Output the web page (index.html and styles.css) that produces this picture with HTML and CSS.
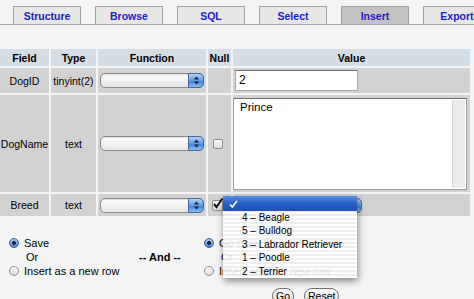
FILE: index.html
```html
<!DOCTYPE html>
<html>
<head>
<meta charset="utf-8">
<link rel="stylesheet" href="styles.css">
</head>
<body>
<div class="tabs">
  <div class="tab">Structure</div>
  <div class="tab">Browse</div>
  <div class="tab">SQL</div>
  <div class="tab">Select</div>
  <div class="tab active">Insert</div>
  <div class="tab">Export</div>
</div>

<table class="grid">
  <colgroup>
    <col class="c-field"><col class="c-type"><col class="c-func"><col class="c-null"><col class="c-value">
  </colgroup>
  <tr class="hdr">
    <th>Field</th><th>Type</th><th>Function</th><th>Null</th><th>Value</th>
  </tr>
  <tr class="r1">
    <td>DogID</td>
    <td>tinyint(2)</td>
    <td><div class="sel"><span class="sel-fill"></span><span class="sel-btn"><svg width="7" height="9" viewBox="0 0 7 9"><path d="M3.5 0.5 L6.2 3.6 H0.8 Z M3.5 8.5 L6.2 5.4 H0.8 Z" fill="#16254a"/></svg></span></div></td>
    <td></td>
    <td class="val"><div class="txt">2</div></td>
  </tr>
  <tr class="r2">
    <td>DogName</td>
    <td>text</td>
    <td><div class="sel"><span class="sel-fill"></span><span class="sel-btn"><svg width="7" height="9" viewBox="0 0 7 9"><path d="M3.5 0.5 L6.2 3.6 H0.8 Z M3.5 8.5 L6.2 5.4 H0.8 Z" fill="#16254a"/></svg></span></div></td>
    <td><div class="cb"></div></td>
    <td class="val"><div class="area"><span class="area-text">Prince</span><span class="scroll"></span></div></td>
  </tr>
  <tr class="r3">
    <td>Breed</td>
    <td>text</td>
    <td><div class="sel"><span class="sel-fill"></span><span class="sel-btn"><svg width="7" height="9" viewBox="0 0 7 9"><path d="M3.5 0.5 L6.2 3.6 H0.8 Z M3.5 8.5 L6.2 5.4 H0.8 Z" fill="#16254a"/></svg></span></div></td>
    <td><div class="cb checked"><svg width="12" height="12" viewBox="0 0 12 12"><path d="M2 6 L4.5 9 L10.5 0.5" fill="none" stroke="#111" stroke-width="2"/></svg></div></td>
    <td class="val"><div class="sel wide"><span class="sel-fill"></span><span class="sel-btn"></span></div></td>
  </tr>
</table>

<div class="options">
  <div class="opt-col left">
    <div class="line"><span class="radio on"></span>Save</div>
    <div class="line indent">Or</div>
    <div class="line"><span class="radio"></span>Insert as a new row</div>
  </div>
  <div class="and">-- And --</div>
  <div class="opt-col right">
    <div class="line"><span class="radio on"></span>Go back to previous page</div>
    <div class="line indent">Or</div>
    <div class="line"><span class="radio"></span>Insert another new row</div>
  </div>
</div>

<div class="buttons">
  <button class="btn">Go</button>
  <button class="btn">Reset</button>
</div>

<div class="menu">
  <div class="mi selected"><svg width="9" height="8" viewBox="0 0 9 8"><path d="M1 4.5 L3.3 7 L8 1" fill="none" stroke="#fff" stroke-width="1.6"/></svg></div>
  <div class="mi">4 – Beagle</div>
  <div class="mi">5 – Bulldog</div>
  <div class="mi">3 – Labrador Retriever</div>
  <div class="mi">1 – Poodle</div>
  <div class="mi">2 – Terrier</div>
</div>
</body>
</html>
```

FILE: styles.css
```css
html, body {
  margin: 0;
  overflow: hidden;
}
body {
  width: 474px;
  height: 299px;
  background: #f4f4f4;
  font-family: "Liberation Sans", Arial, sans-serif;
  font-size: 10.5px;
  color: #000;
  position: relative;
}

/* tabs */
.tabs {
  display: flex;
  align-items: flex-end;
  gap: 14px;
  padding-left: 13px;
  height: 24px;
  border-bottom: 1px solid #a8a8a8;
}
.tab {
  box-sizing: border-box;
  flex: none;
  width: 68px;
  height: 18px;
  border: 1px solid #a3a3a3;
  border-bottom: none;
  background: #e7e7e7;
  color: #2020cc;
  font-weight: bold;
  font-size: 10.5px;
  display: flex;
  align-items: center;
  justify-content: center;
  white-space: nowrap;
}
.tab.active {
  background: #c2c2c2;
}

/* table */
.grid {
  border-collapse: separate;
  border-spacing: 2px;
  margin: 22px 0 0 -2px;
  table-layout: fixed;
  width: 474px;
}
.c-field { width: 49px; }
.c-type { width: 45px; }
.c-func { width: 108px; }
.c-null { width: 23px; }
.c-value { width: 237px; }
.grid th, .grid td {
  padding: 0;
  text-align: center;
  vertical-align: middle;
  white-space: nowrap;
}
.grid th {
  background: #d4dce4;
  height: 17px;
  font-weight: bold;
  font-size: 10.5px;
}
.grid td {
  background: #d2d2d2;
}
.r1 td { height: 25px; }
.r2 td { height: 97px; }
.r3 td { height: 22px; }
.grid td.val {
  text-align: left;
}

/* aqua select */
.sel {
  box-sizing: border-box;
  display: flex;
  width: 104px;
  height: 15px;
  margin: 0 auto;
  border: 1px solid #8a8a8a;
  border-radius: 5px;
  background: linear-gradient(#fdfdfd, #e6e6e6);
  box-shadow: inset 0 1px 1px rgba(0,0,0,0.12);
}
.sel.wide {
  width: 128px;
  margin-left: 1px;
}
.sel-fill {
  flex: 1;
}
.sel-btn {
  box-sizing: border-box;
  flex: none;
  width: 16px;
  margin: -1px -1px -1px 0;
  border: 1px solid #45679b;
  border-radius: 0 5px 5px 0;
  background: linear-gradient(#b7d3f5, #5e9be6 50%, #3f86e0 55%, #8cbcf2);
  display: flex;
  align-items: center;
  justify-content: center;
}

/* checkbox */
.cb {
  box-sizing: border-box;
  width: 10px;
  height: 10px;
  margin-left: 5px;
  border: 1px solid #8a8a8a;
  border-radius: 2px;
  background: linear-gradient(#ffffff, #dcdcdc);
  position: relative;
}
.cb.checked svg {
  position: absolute;
  left: -1px;
  top: -3px;
}
.r3 .cb {
  margin-left: 4px;
  width: 11px;
  height: 11px;
}

/* value inputs */
.txt {
  box-sizing: border-box;
  width: 123px;
  height: 21px;
  margin-left: 2px;
  background: #fff;
  border: 1px solid #a9a9a9;
  border-top-color: #707070;
  font-size: 12px;
  line-height: 17px;
  padding: 1px 3px;
}
.area {
  box-sizing: border-box;
  width: 234px;
  height: 92px;
  display: flex;
  justify-content: space-between;
  background: #fff;
  border: 1px solid #9c9c9c;
  border-top-color: #717171;
}
.area-text {
  font-size: 11.5px;
  padding: 2px 0 0 6px;
}
.scroll {
  width: 12px;
  margin: 1px 1px 1px 0;
  background: #ececec;
  border-left: 1px solid #d4d4d4;
}

/* options */
.options {
  display: flex;
  margin-top: 18px;
  padding-left: 9px;
  font-size: 11px;
}
.opt-col.left {
  width: 130px;
}
.and {
  width: 65px;
  align-self: center;
  font-weight: bold;
}
.line {
  height: 14px;
  display: flex;
  align-items: center;
  white-space: nowrap;
}
.line.indent {
  padding-left: 17px;
}
.radio {
  box-sizing: border-box;
  width: 10px;
  height: 10px;
  margin-right: 5px;
  border-radius: 50%;
  border: 1px solid #8e8e8e;
  background: linear-gradient(#ffffff, #dadada);
}
.radio.on {
  border-color: #3b5f96;
  background: radial-gradient(circle, #15233f 0, #15233f 1.6px, transparent 2.2px), linear-gradient(#a7c8f2, #3f85dd);
}

/* buttons */
.buttons {
  display: flex;
  gap: 10px;
  padding-left: 272px;
  margin-top: 10px;
}
.btn {
  height: 16px;
  padding: 0 3px;
  border: 1px solid #6f6f6f;
  border-radius: 8px;
  background: linear-gradient(#ffffff, #dcdcdc);
  font-family: "Liberation Sans", Arial, sans-serif;
  font-size: 10.5px;
  line-height: 14px;
  color: #000;
}

/* popup menu */
.menu {
  position: absolute;
  left: 223px;
  top: 196px;
  width: 134px;
  height: 82px;
  background: repeating-linear-gradient(rgba(255,255,255,0.9) 0 2px, rgba(238,238,238,0.9) 2px 4px);
  box-shadow: 1px 3px 7px rgba(0,0,0,0.45);
  font-size: 10px;
}
.mi {
  height: 13.4px;
  line-height: 13.4px;
  padding-left: 19px;
  white-space: nowrap;
}
.mi.selected {
  height: 15px;
  padding-left: 6px;
  display: flex;
  align-items: center;
  background: linear-gradient(#5a8ee0, #2a5fc6 50%, #1f50b8);
}
```
